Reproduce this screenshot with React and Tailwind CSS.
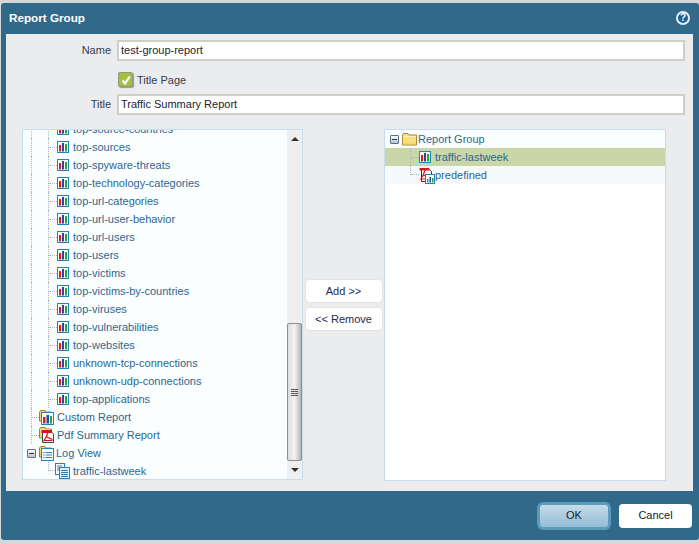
const reports = [
  'top-source-countries',
  'top-sources',
  'top-spyware-threats',
  'top-technology-categories',
  'top-url-categories',
  'top-url-user-behavior',
  'top-url-users',
  'top-users',
  'top-victims',
  'top-victims-by-countries',
  'top-viruses',
  'top-vulnerabilities',
  'top-websites',
  'unknown-tcp-connections',
  'unknown-udp-connections',
  'top-applications',
];

function ChartIcon() {
  return (
    <svg viewBox="0 0 12 12" className="w-[12px] h-[12px] shrink-0">
      <rect x="0.5" y="0.5" width="11" height="11" fill="#fff" stroke="#2382c4" />
      <rect x="2" y="4" width="2" height="6.5" fill="#e8180f" />
      <rect x="5" y="2" width="2" height="8.5" fill="#2348b0" />
      <rect x="8" y="3" width="2" height="7.5" fill="#27a637" />
    </svg>
  );
}

function FolderBack() {
  return (
    <>
      <path d="M0.5 11V2.2L1.5 0.5H6L7 2H12.5V11Z" fill="#efd27a" stroke="#9a8136" />
      <path d="M1.5 3H11.5" stroke="#fff3c4" />
    </>
  );
}

function ChartFolderIcon() {
  return (
    <svg viewBox="0 0 15 15" className="w-[15px] h-[15px] shrink-0">
      <FolderBack />
      <rect x="2.5" y="2.5" width="12" height="12" fill="#fff" stroke="#2382c4" />
      <rect x="4" y="7" width="2.5" height="6.5" fill="#e8180f" />
      <rect x="7.5" y="5" width="2.5" height="8.5" fill="#2348b0" />
      <rect x="11" y="6" width="2" height="7.5" fill="#27a637" />
    </svg>
  );
}

function PdfFolderIcon() {
  return (
    <svg viewBox="0 0 15 16" className="w-[15px] h-[16px] shrink-0">
      <FolderBack />
      <path d="M3.5 4.5H12L14.5 7V15.5H3.5Z" fill="#fff" stroke="#444" />
      <path d="M2.5 3H13V6H2.5Z" fill="#d8141c" />
      <path d="M9 5C8 9 6.5 12 4.5 14.5M8 10C10 11 12 12 13.5 12.5M5 13.5H13.5" fill="none" stroke="#d8141c" strokeWidth="1.2" />
    </svg>
  );
}

function LogFolderIcon() {
  return (
    <svg viewBox="0 0 15 15" className="w-[15px] h-[15px] shrink-0">
      <FolderBack />
      <rect x="2.5" y="2.5" width="12" height="12" fill="#fff" stroke="#2382c4" />
      <path d="M4 6.5H5.5M6.5 6.5H13M4 9H5.5M6.5 9H13M4 11.5H5.5M6.5 11.5H13" stroke="#2a7cb8" />
    </svg>
  );
}

function LogDocsIcon() {
  return (
    <svg viewBox="0 0 15 16" className="w-[15px] h-[16px] shrink-0">
      <rect x="0.5" y="0.5" width="9" height="11" fill="#fff" stroke="#2382c4" />
      <path d="M2 3H7M2 5H7M2 7H7" stroke="#2a7cb8" />
      <rect x="4.5" y="4.5" width="10" height="11" fill="#e3f1fa" stroke="#2382c4" />
      <path d="M6 7.5H13M6 9.5H13M6 11.5H13M6 13.5H13" stroke="#2a7cb8" />
    </svg>
  );
}

function PdfChartIcon() {
  return (
    <svg viewBox="0 0 16 17" className="w-[16px] h-[17px] shrink-0">
      <path d="M2.5 1.5H9L12.5 4.5V14.5H2.5Z" fill="#fff" stroke="#333" />
      <path d="M0.5 1H10V3.5H0.5Z" fill="#d8141c" />
      <path d="M6 3C5 7 3.5 10 1.5 12.5M5 8C6.5 9 8 9.5 9 10M2 12H9" fill="none" stroke="#d8141c" strokeWidth="1.2" />
      <rect x="6.5" y="7.5" width="9" height="9" fill="#fff" stroke="#2382c4" />
      <rect x="8" y="12" width="1.5" height="3.5" fill="#27a637" />
      <rect x="10.5" y="10" width="1.5" height="5.5" fill="#2348b0" />
      <rect x="13" y="11" width="1.5" height="4.5" fill="#27a637" />
    </svg>
  );
}

function PlainFolderIcon() {
  return (
    <svg viewBox="0 0 15 13" className="w-[15px] h-[13px] shrink-0">
      <path d="M0.5 12V2L1.5 0.5H6L7 2H14.5V12Z" fill="#fbdf7c" stroke="#a58a3c" />
      <path d="M1.5 3.5H13.5" stroke="#fff4c0" />
      <path d="M1.5 11H13.5" stroke="#f2c44c" />
    </svg>
  );
}

function MinusBox() {
  return (
    <span className="w-[9px] h-[9px] shrink-0 border border-[#5d6f85] bg-gradient-to-b from-[#fafbfc] to-[#b9c4d2] flex items-center justify-center rounded-[1px]">
      <span className="w-[5px] h-[1px] bg-[#26384f]" />
    </span>
  );
}

function TreeText({ children }) {
  return <span className="text-[#2d6690] whitespace-nowrap">{children}</span>;
}

function Guide({ width, last, connector }) {
  return (
    <span className={`shrink-0 flex items-center border-l border-dotted border-[#b4b4b4] ${last ? 'h-1/2 self-start' : 'h-full'}`} style={{ width }}>
      {connector && <span className={`w-full border-t border-dotted border-[#b4b4b4] ${last ? 'self-end' : ''}`} />}
    </span>
  );
}

function ReportRow({ label }) {
  return (
    <div className="h-[18px] flex items-center pl-[8px]">
      <Guide width={17} />
      <Guide width={9} connector />
      <ChartIcon />
      <span className="ml-[4px]"><TreeText>{label}</TreeText></span>
    </div>
  );
}

function FolderRow({ icon, label }) {
  return (
    <div className="h-[18px] flex items-center pl-[8px]">
      <Guide width={8} connector />
      {icon}
      <span className="ml-[3px]"><TreeText>{label}</TreeText></span>
    </div>
  );
}

function Scrollbar() {
  return (
    <div className="w-[15px] shrink-0 flex flex-col bg-[#efefef] items-center">
      <div className="h-[18px] w-full flex items-center justify-center">
        <span className="border-x-[4px] border-x-transparent border-b-[4px] border-b-[#333]" />
      </div>
      <div className="flex-1 w-full" />
      <div className="h-[138px] w-full rounded-[2px] border border-[#8f8f8f] bg-gradient-to-r from-[#dcdcdc] via-[#f4f4f4] to-[#b4b4b4] flex flex-col items-center justify-center gap-[1px]">
        <span className="w-[7px] h-[1px] bg-[#555]" />
        <span className="w-[7px] h-[1px] bg-[#555]" />
        <span className="w-[7px] h-[1px] bg-[#555]" />
        <span className="w-[7px] h-[1px] bg-[#555]" />
      </div>
      <div className="h-[18px] w-full flex items-center justify-center">
        <span className="border-x-[4px] border-x-transparent border-t-[4px] border-t-[#333]" />
      </div>
    </div>
  );
}

function Field({ label, value }) {
  return (
    <div className="flex items-center h-[21px]">
      <label className="w-[105px] text-right text-[#333b4d]">{label}</label>
      <div className="ml-[6px] w-[568px] h-[21px] bg-white border-2 border-[#cfcfc8] pl-[2px] flex items-center text-[#1c2230]">{value}</div>
    </div>
  );
}

function SideButton({ children }) {
  return (
    <button className="w-[78px] h-[24px] pt-[1px] bg-white rounded-[4px] border border-[#e4e4e4] text-[#1e2a50]">{children}</button>
  );
}

export default function App() {
  return (
    <div className="w-[699px] h-[544px] overflow-hidden bg-[#d5d8d8] pt-[3px] pb-[4px] pl-[1px] text-[11px] leading-none font-['Liberation_Sans',Arial,sans-serif]">
      <div className="h-full bg-[#30698a] rounded-[3px] flex flex-col">
        <div className="h-[31px] shrink-0 flex items-center justify-between pl-[8px] pr-[9px] pb-[2px]">
          <span className="text-white font-bold text-[11.7px]">Report Group</span>
          <span className="w-[14px] h-[14px] rounded-full bg-[#1d5f92] border-2 border-[#e6eef4] flex items-center justify-center text-white text-[10px] font-bold">?</span>
        </div>

        <div className="ml-[5px] mr-[6px] h-[457px] shrink-0 bg-[#ebecee] pt-[6px]">
          <Field label="Name" value="test-group-report" />
          <div className="h-[33px] flex items-center pl-[112px] pt-[4px]">
            <span className="w-[15px] h-[15px] rounded-[2px] border border-[#8a9a7a] bg-[#a5bf3f] shadow-[1px_1px_1px_#999] flex items-center justify-center">
              <svg viewBox="0 0 12 12" className="w-[12px] h-[12px]">
                <path d="M2.5 6.5L5 9.5L9.8 2.5" fill="none" stroke="#fff" strokeWidth="2.2" />
              </svg>
            </span>
            <span className="ml-[4px] pt-[1px] text-[#333b4d]">Title Page</span>
          </div>
          <Field label="Title" value="Traffic Summary Report" />

          <div className="flex mt-[14px] pl-[16px]">
            <div className="w-[281px] h-[351px] flex border border-[#c6dcf2] bg-[#fbfefe]">
              <div className="flex-1 overflow-hidden">
                <div className="-mt-[10px]">
                  {reports.map((r) => <ReportRow key={r} label={r} />)}
                  <FolderRow icon={<ChartFolderIcon />} label="Custom Report" />
                  <FolderRow icon={<PdfFolderIcon />} label="Pdf Summary Report" />
                  <div className="h-[18px] flex items-center pl-[4px]">
                    <MinusBox />
                    <span className="ml-[3px] flex items-center gap-[2px]"><LogFolderIcon /><TreeText>Log View</TreeText></span>
                  </div>
                  <div className="h-[18px] flex items-center pl-[25px]">
                    <Guide width={7} connector last />
                    <LogDocsIcon />
                    <span className="ml-[3px]"><TreeText>traffic-lastweek</TreeText></span>
                  </div>
                </div>
              </div>
              <Scrollbar />
            </div>

            <div className="w-[81px] shrink-0 flex flex-col items-center gap-[4px] pt-[150px]">
              <SideButton>Add &gt;&gt;</SideButton>
              <SideButton>&lt;&lt; Remove</SideButton>
            </div>

            <div className="w-[282px] h-[352px] border border-[#c6dcf2] bg-white">
              <div className="h-[18px] flex items-center pl-[5px] bg-[#fbfefe]">
                <MinusBox />
                <span className="ml-[3px]"><PlainFolderIcon /></span>
                <span className="ml-[1px]"><TreeText>Report Group</TreeText></span>
              </div>
              <div className="h-[18px] flex items-center pl-[25px] bg-[#c8d6a8]">
                <Guide width={9} connector />
                <ChartIcon />
                <span className="ml-[4px]"><TreeText>traffic-lastweek</TreeText></span>
              </div>
              <div className="h-[18px] flex items-center pl-[25px] bg-[#f6fafa]">
                <Guide width={9} connector last />
                <PdfChartIcon />
                <span><TreeText>predefined</TreeText></span>
              </div>
            </div>
          </div>
        </div>

        <div className="flex-1 flex items-center justify-end gap-[8px] pr-[7px]">
          <button className="w-[74px] h-[28px] rounded-[6px] border-[3px] border-[#5c9abd] bg-gradient-to-b from-[#c6dce9] to-[#93bcd5] text-[#14202e]">OK</button>
          <button className="w-[73px] h-[24px] rounded-[4px] bg-white text-[#14202e]">Cancel</button>
        </div>
      </div>
    </div>
  );
}
